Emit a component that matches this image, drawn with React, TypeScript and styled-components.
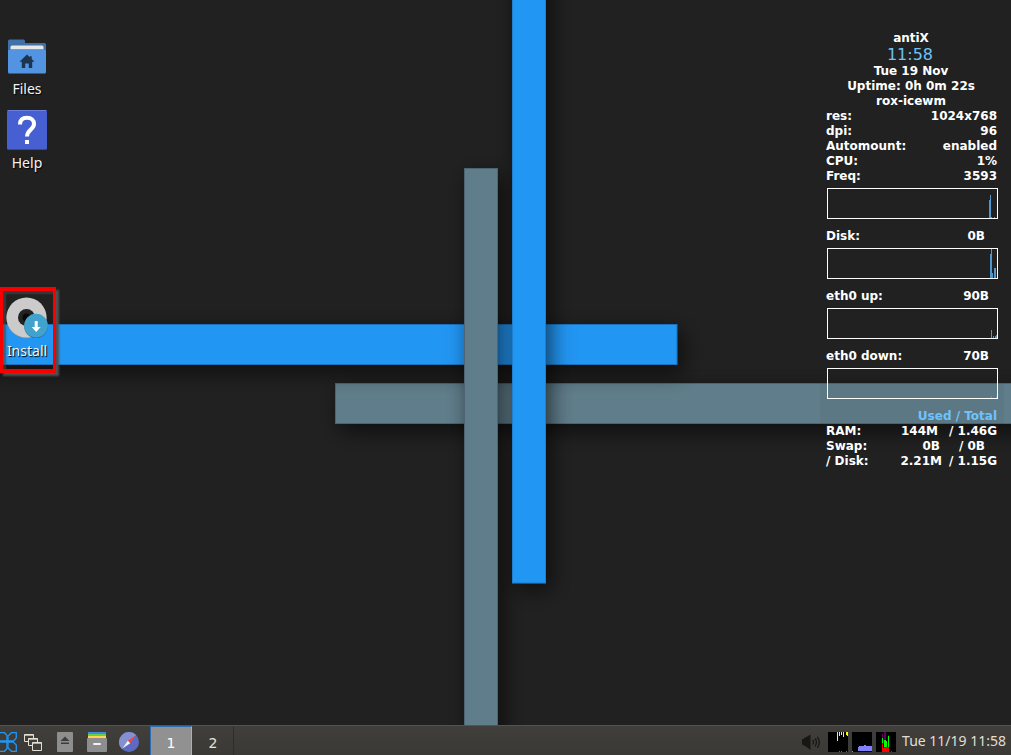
import React from "react";
import styled, { createGlobalStyle, css } from "styled-components";

const GlobalStyle = createGlobalStyle`
  *, *::before, *::after { box-sizing: border-box; }
  body {
    margin: 0;
    background: #212121;
    font-family: "Noto Sans", "Open Sans", sans-serif;
  }
  svg { display: block; }
`;

const Screen = styled.div`
  min-height: 100vh;
  display: flex;
  flex-direction: column;
`;

const Desktop = styled.main`
  position: relative;
  isolation: isolate;
  flex: 1;
  display: flex;
  justify-content: space-between;
  align-items: flex-start;
  overflow: hidden;
`;

const WallpaperArt = styled.svg`
  position: absolute;
  inset: 0;
  z-index: -1;
  width: 100%;
  height: 100%;
`;

const IconColumn = styled.nav`
  display: flex;
  flex-direction: column;
  align-items: flex-start;
  padding-top: 36px;
`;

const Shortcut = styled.button<{ $highlighted?: boolean }>`
  display: flex;
  flex-direction: column;
  align-items: center;
  gap: 3px;
  width: 54px;
  height: 74px;
  padding: 0;
  border: 0;
  background: none;
  color: #f4f4f4;
  font: 14px/20px "Noto Sans", sans-serif;
  text-shadow: 1px 1px 1px #000;
  cursor: pointer;
  ${(p) =>
    p.$highlighted &&
    css`
      width: 56px;
      height: 86px;
      margin-top: 103px;
      padding: 6px 2px 0 0;
      gap: 2px;
      border: 3px solid #f80000;
      border-top-width: 4px;
      border-bottom-width: 4px;
      box-shadow: 3px 3px 2px #505050, inset 3px 3px 2px rgba(70, 70, 70, 0.7);
    `}
`;

const Monitor = styled.aside`
  width: 184px;
  min-height: 598px;
  margin: 27px 7px 0 0;
  padding: 4px 6px 0;
  background: rgba(32, 32, 32, 0.05);
  color: #fff;
  font: bold 12px/15px "DejaVu Sans", sans-serif;
`;

const Banner = styled.header`
  padding-right: 2px;
  text-align: center;
`;

const BannerLine = styled.div``;

const BigTime = styled.div`
  color: #6fc3f5;
  font-weight: normal;
  font-size: 16px;
  line-height: 18px;
  padding-right: 2px;
`;

const Facts = styled.dl`
  margin: 0;
`;

const Fact = styled.div<{ $inset?: number }>`
  display: flex;
  justify-content: space-between;
  padding-right: ${(p) => p.$inset ?? 1}px;
`;

const Term = styled.dt``;

const Value = styled.dd`
  margin: 0;
`;

const GraphFrame = styled.div`
  height: 31px;
  margin: 4px 0 10px 1px;
  border: 1px solid #fff;
  display: flex;
  justify-content: flex-end;
`;

const MemoryTable = styled.table`
  width: 100%;
  border-collapse: collapse;
  table-layout: fixed;
  font: inherit;
  th, td { padding: 0; white-space: nowrap; }
`;

const UsageHead = styled.th`
  color: #6fc3fb;
  text-align: right;
  && { padding-right: 1px; }
`;

const RowName = styled.th`
  text-align: left;
`;

const Amount = styled.td<{ $inset?: number }>`
  text-align: right;
  && { padding-right: ${(p) => p.$inset ?? 0}px; }
`;

const Taskbar = styled.footer`
  display: flex;
  align-items: stretch;
  justify-content: space-between;
  height: 30px;
  border-top: 1px solid #55534e;
  background: linear-gradient(#403f3b, #3a3935);
`;

const Cluster = styled.div`
  display: flex;
  align-items: center;
`;

const Launchers = styled(Cluster)`
  padding-right: 5px;
`;

const Launcher = styled.button<{ $width?: number }>`
  display: grid;
  place-items: center;
  width: ${(p) => p.$width ?? 32}px;
  height: 29px;
  padding: 3px 0 0;
  border: 0;
  background: none;
  cursor: pointer;
`;

const Workspace = styled.button<{ $active?: boolean }>`
  align-self: stretch;
  width: 42px;
  padding: 3px 0 0;
  border: 1px solid transparent;
  border-right-color: #2e2d2a;
  border-bottom: 0;
  background: none;
  color: #e4e2dc;
  font: 14px/16px "DejaVu Sans", sans-serif;
  ${(p) =>
    p.$active &&
    css`
      border-color: #2f6cb0;
      border-right-color: #6cc0ff;
      background: #919191;
      color: #fff;
    `}
`;

const Tray = styled(Cluster)`
  gap: 4px;
  padding: 3px 5px 0 0;
`;

const Clock = styled.time`
  padding: 0 0 2px 2px;
  color: #e2dfd6;
  font-size: 14px;
  line-height: 20px;
  white-space: nowrap;
`;

const Wallpaper = () => (
  <WallpaperArt viewBox="0 0 1011 725" preserveAspectRatio="xMinYMin slice" aria-hidden="true">
    <defs>
      <filter id="cast" filterUnits="userSpaceOnUse" x="-100" y="-100" width="1300" height="1000">
        <feDropShadow dx="5" dy="7" stdDeviation="11" floodColor="#000" floodOpacity="0.6" />
      </filter>
    </defs>
    <rect width="1011" height="725" fill="#212121" />
    <g strokeWidth="1">
      <rect x="335.500" y="383.500" width="760" height="40" fill="#607d8b" stroke="#4d6570" filter="url(#cast)" />
      <rect x="-60" y="324.500" width="737" height="40" fill="#2196f3" stroke="#1a73bb" filter="url(#cast)" />
      <rect x="464.500" y="168.500" width="33" height="620" fill="#607d8b" stroke="#4d6570" filter="url(#cast)" />
      <rect x="512.500" y="-60" width="33" height="643" fill="#2196f3" stroke="#1c7fd0" filter="url(#cast)" />
      <rect x="464.500" y="168.500" width="33" height="620" fill="#607d8b" stroke="#4d6570" />
    </g>
  </WallpaperArt>
);

const FolderIcon = () => (
  <svg width="40" height="40" viewBox="0 0 40 40" aria-hidden="true">
    <path d="M1 5a1.500 1.500 0 0 1 1.500-1.500H16.500a1.500 1.500 0 0 1 1.500 1.500V7H37.500A1.500 1.500 0 0 1 39 8.500V20H1Z" fill="#4070aa" />
    <rect x="3.500" y="9.500" width="33" height="10" rx="1.500" fill="#e6e6e6" />
    <rect x="1" y="13.500" width="38" height="24.500" rx="1.500" fill="#2c5d96" />
    <rect x="1" y="13.500" width="38" height="23.500" rx="1.500" fill="#5294e2" />
    <path d="M20 18.500 12.500 25.700H14.800V32H18.200V27.500H21.800V32H25.200V25.700H27.500L24.700 23V20.300H22.800V21.200Z" fill="#1d344f" />
  </svg>
);

const HelpIcon = () => (
  <svg width="40" height="40" viewBox="0 0 40 40" aria-hidden="true">
    <rect width="40" height="40" rx="1.500" fill="#3747a4" />
    <rect y="1" width="40" height="38" rx="1.500" fill="#4660d2" />
    <path d="M0 1.500A1.500 1.500 0 0 1 1.500 0H38.500A1.500 1.500 0 0 1 40 1.500V1H0Z" fill="#6b80dc" />
    <path d="M13 14.500C13 10.100 15.600 7.800 20 7.800S27 10.300 27 14C27 19.500 20 19.500 20 26.500" fill="none" stroke="#fff" strokeWidth="4" />
    <rect x="18" y="30" width="4" height="4" fill="#fff" />
  </svg>
);

const InstallIcon = () => (
  <svg width="42" height="42" viewBox="0 0 42 42" aria-hidden="true">
    <circle cx="20.500" cy="21.300" r="20" fill="#8d8d8d" />
    <circle cx="20.500" cy="20.500" r="20" fill="#cbcbcb" />
    <circle cx="20.500" cy="20.500" r="8.500" fill="#222" />
    <circle cx="20.500" cy="20.500" r="4" fill="#080808" />
    <circle cx="30" cy="29.300" r="11.800" fill="#2c7090" />
    <circle cx="30" cy="28.600" r="11.800" fill="#42a2ce" />
    <path d="M28.700 24H31.700V30H34.700L30.200 35 25.700 30H28.700Z" fill="#fff" />
  </svg>
);

const MenuIcon = () => (
  <svg width="17" height="20" viewBox="0 0 17 20" fill="none" stroke="#2196f3" strokeWidth="1.300" aria-hidden="true">
    <path d="M0 .7H4.500L7 3.500V16.500L4.500 19.300H0" />
    <path d="M16.300 6V.7H11.500L8 4V16L11.500 19.300H16.300V13L13.500 10.200H0M16.300 6 13.500 9H0" />
  </svg>
);

const WindowsIcon = () => (
  <svg width="20" height="20" viewBox="0 0 20 20" fill="#403f3b" stroke="#e4e0d4" aria-hidden="true">
    <path d="M1.500 2.500H10.500V9.500H1.500ZM1 3.200H11" />
    <path d="M5.500 6.500H14.500V13.500H5.500ZM5 7.200H15" />
    <path d="M9.500 10.500H18.500V18.500H9.500ZM9 11.200H19" />
  </svg>
);

const EjectIcon = () => (
  <svg width="20" height="20" viewBox="0 0 20 20" aria-hidden="true">
    <rect x="2" width="16" height="20" rx="1" fill="#8e8e8e" />
    <path d="M10 4.500 14.500 9H5.500ZM6 10.500H14V12H6Z" fill="#3d3d3d" />
  </svg>
);

const CabinetIcon = () => (
  <svg width="20" height="20" viewBox="0 0 20 20" aria-hidden="true">
    <path d="M1 0H19V2H1Z" fill="#3f8be0" />
    <path d="M1 2H19V4H1Z" fill="#66cf4a" />
    <path d="M1 4H19V6H1Z" fill="#ffd54f" />
    <rect y="6" width="20" height="14" rx="1" fill="#8e8e8e" />
    <rect x="6" y="11" width="8" height="2" rx="1" fill="#f2f2f2" />
  </svg>
);

const CompassIcon = () => (
  <svg width="20" height="20" viewBox="0 0 20 20" aria-hidden="true">
    <circle cx="10" cy="10" r="10" fill="#5c6bc0" />
    <path d="M2.900 17.100A10 10 0 0 1 17.100 2.900Z" fill="#8490cf" />
    <path d="M16.500 3.500 8.800 8.800 11.200 11.200Z" fill="#ef4545" />
    <path d="M3.500 16.500 8.800 8.800 11.200 11.200Z" fill="#f5f5f5" />
  </svg>
);

const SpeakerIcon = () => (
  <svg width="23" height="20" viewBox="0 0 23 20" aria-hidden="true">
    <path d="M1 7.500 9.500 2.500V18L5 14.500 1 12.500Z" fill="#171716" />
    <path d="M11.800 8Q13.500 10 11.800 12.500M14 6.500Q17 10 14 14.500M16.300 5Q20.500 10 16.300 16" fill="none" stroke="#171716" strokeWidth="1.300" />
  </svg>
);

type Bar = [x: number, y: number, w: number, h: number, fill?: string];

const TrayMeter = ({ label, bars }: { label: string; bars: Bar[] }) => (
  <svg width="20" height="20" viewBox="0 0 20 20" role="img" aria-label={label} shapeRendering="crispEdges">
    <rect width="20" height="20" fill="#000" />
    {bars.map(([x, y, w, h, fill], i) => (
      <rect key={i} x={x} y={y} width={w} height={h} fill={fill} />
    ))}
  </svg>
);

const NET: Bar[] = [
  [9, 0, 1, 9, "#ff0"], [11, 0, 1, 4, "#ff0"], [13, 0, 1, 3, "#ff0"], [15, 0, 1, 5, "#ff0"],
  [18, 0, 1, 3, "#ff0"], [19, 0, 1, 4, "#ff0"], [11, 19, 1, 1, "#f0f"], [13, 19, 1, 1, "#f0f"], [18, 19, 1, 1, "#f0f"],
];
const MEM: Bar[] = [
  [6, 15, 14, 4, "#8080ff"], [7, 14, 13, 1, "#8080ff"], [12, 13, 2, 1, "#8080ff"], [6, 18, 8, 1, "#8080ff"], [0, 19, 1, 1, "#8080ff"],
];
const CPU: Bar[] = [
  [6, 2, 1, 12, "#600060"], [8, 0, 2, 8, "#600060"], [9, 2, 1, 6, "#600060"], [12, 3, 1, 6, "#600060"],
  [6, 6, 1, 9, "#0f0"], [8, 8, 2, 7, "#0f0"], [10, 9, 1, 6, "#0f0"], [12, 4, 1, 12, "#0f0"],
  [6, 11, 1, 9, "#f00"], [7, 16, 1, 4, "#f00"], [8, 15, 3, 5, "#f00"], [11, 15, 2, 5, "#f00"], [15, 19, 1, 1, "#f00"],
];

const Graph = ({ label, bars }: { label: string; bars: Bar[] }) => (
  <GraphFrame>
    <svg width="20" height="29" viewBox="0 0 20 29" role="img" aria-label={label} fill="#4f97cf" shapeRendering="crispEdges">
      {bars.map(([x, y, w, h], i) => (
        <rect key={i} x={x} y={y} width={w} height={h} />
      ))}
    </svg>
  </GraphFrame>
);

const SYSTEM = [
  ["res:", "1024x768"],
  ["dpi:", "96"],
  ["Automount:", "enabled"],
  ["CPU:", "1%"],
  ["Freq:", "3593"],
];

const METERS: { name: string; value: string; inset: number; bars: Bar[] }[] = [
  { name: "Disk:", value: "0B", inset: 13, bars: [[13, 5, 1, 24], [14, 0, 1, 29], [15, 24, 1, 5], [17, 19, 2, 10]] },
  { name: "eth0 up:", value: "90B", inset: 9, bars: [[14, 21, 1, 8], [16, 27, 1, 2], [18, 27, 1, 2], [19, 26, 1, 3]] },
  { name: "eth0 down:", value: "70B", inset: 9, bars: [[14, 27, 1, 2], [19, 27, 1, 2]] },
];

const STORAGE = [
  { name: "RAM:", used: "144M", usedInset: 4, total: "/ 1.46G", totalInset: 1 },
  { name: "Swap:", used: "0B", usedInset: 2, total: "/ 0B", totalInset: 13 },
  { name: "/ Disk:", used: "2.21M", usedInset: 0, total: "/ 1.15G", totalInset: 1 },
];

export default function App() {
  return (
    <Screen>
      <GlobalStyle />
      <Desktop>
        <Wallpaper />
        <IconColumn aria-label="Desktop">
          <Shortcut><FolderIcon />Files</Shortcut>
          <Shortcut><HelpIcon />Help</Shortcut>
          <Shortcut $highlighted><InstallIcon />Install</Shortcut>
        </IconColumn>
        <Monitor aria-label="System monitor">
          <Banner>
            <BannerLine>antiX</BannerLine>
            <BigTime>11:58</BigTime>
            <BannerLine>Tue 19 Nov</BannerLine>
            <BannerLine>Uptime: 0h 0m 22s</BannerLine>
            <BannerLine>rox-icewm</BannerLine>
          </Banner>
          <Facts>
            {SYSTEM.map(([name, value]) => (
              <Fact key={name}><Term>{name}</Term><Value>{value}</Value></Fact>
            ))}
          </Facts>
          <Graph label="CPU history" bars={[[12, 11, 1, 18], [13, 6, 1, 23], [14, 28, 1, 1], [17, 28, 1, 1]]} />
          {METERS.map((m) => (
            <React.Fragment key={m.name}>
              <Facts>
                <Fact $inset={m.inset}><Term>{m.name}</Term><Value>{m.value}</Value></Fact>
              </Facts>
              <Graph label={`${m.name} history`} bars={m.bars} />
            </React.Fragment>
          ))}
          <MemoryTable>
            <colgroup><col style={{ width: 56 }} /><col /><col style={{ width: 56 }} /></colgroup>
            <thead>
              <tr><UsageHead colSpan={3}>Used / Total</UsageHead></tr>
            </thead>
            <tbody>
              {STORAGE.map((s) => (
                <tr key={s.name}>
                  <RowName scope="row">{s.name}</RowName>
                  <Amount $inset={s.usedInset}>{s.used}</Amount>
                  <Amount $inset={s.totalInset}>{s.total}</Amount>
                </tr>
              ))}
            </tbody>
          </MemoryTable>
        </Monitor>
      </Desktop>
      <Taskbar>
        <Cluster>
          <Launchers>
            <Launcher $width={17} aria-label="Menu"><MenuIcon /></Launcher>
            <Launcher aria-label="Window list"><WindowsIcon /></Launcher>
            <Launcher aria-label="Removable drives"><EjectIcon /></Launcher>
            <Launcher aria-label="File manager"><CabinetIcon /></Launcher>
            <Launcher aria-label="Web browser"><CompassIcon /></Launcher>
          </Launchers>
          <Workspace $active>1</Workspace>
          <Workspace>2</Workspace>
        </Cluster>
        <Tray>
          <SpeakerIcon />
          <TrayMeter label="Network" bars={NET} />
          <TrayMeter label="Memory" bars={MEM} />
          <TrayMeter label="Processor" bars={CPU} />
          <Clock>Tue 11/19 11:58</Clock>
        </Tray>
      </Taskbar>
    </Screen>
  );
}
